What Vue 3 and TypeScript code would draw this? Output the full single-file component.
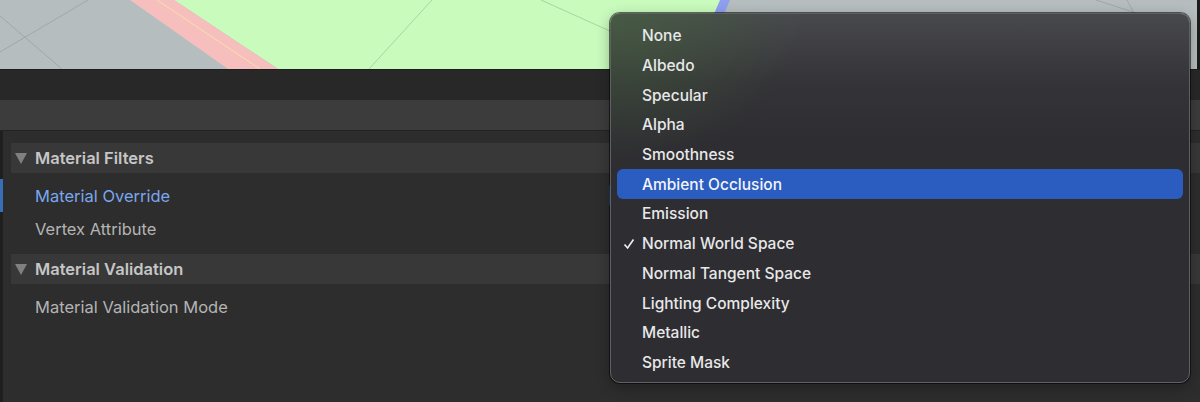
<script setup lang="ts">
interface MenuItem { label: string; active?: boolean; checked?: boolean }
const items: MenuItem[] = [
  { label: 'None' }, { label: 'Albedo' }, { label: 'Specular' }, { label: 'Alpha' },
  { label: 'Smoothness' }, { label: 'Ambient Occlusion', active: true }, { label: 'Emission' },
  { label: 'Normal World Space', checked: true }, { label: 'Normal Tangent Space' },
  { label: 'Lighting Complexity' }, { label: 'Metallic' }, { label: 'Sprite Mask' },
]
</script>

<template>
  <div class="app">
    <div class="scene">
      <svg class="scene-art" width="1197" height="69" viewBox="0 0 1197 69">
        <rect width="1197" height="69" fill="#b5bdbf" />
        <polygon points="174,0 727,0 682,69 278,69" fill="#c9fbbd" />
        <polygon points="130,0 174,0 278,69 228,69" fill="#f6bebc" />
        <polygon points="720,0 730,0 724,14 714,14" fill="#8f9ff0" />
        <line x1="157" y1="0" x2="260" y2="69" stroke="#f0e3a8" stroke-width="1" />
        <g stroke="#9aa2a4" stroke-width="0.8" fill="none">
          <line x1="0" y1="16" x2="62" y2="69" />
          <line x1="0" y1="52" x2="88" y2="0" />
        </g>
        <g stroke="#a3c99b" stroke-width="0.8" fill="none">
          <line x1="369" y1="69" x2="432" y2="0" />
          <line x1="541" y1="0" x2="612" y2="32" />
        </g>
        <g stroke="#9aa2a4" stroke-width="0.8" fill="none">
          <line x1="1096" y1="0" x2="1136" y2="13" />
          <line x1="1127" y1="0" x2="1134" y2="13" />
        </g>
      </svg>
    </div>
    <div class="band"></div>
    <div class="toolbar"></div>
    <div class="panel">
      <section class="group">
        <h3 class="group-head"><span class="tri"></span>Material Filters</h3>
        <div class="row row-focus">
          <span class="row-label">Material Override</span>
          <span class="stub stub-focus"></span>
        </div>
        <div class="row">
          <span class="row-label">Vertex Attribute</span>
          <span class="stub"></span>
        </div>
      </section>
      <section class="group">
        <h3 class="group-head"><span class="tri"></span>Material Validation</h3>
        <div class="row">
          <span class="row-label">Material Validation Mode</span>
          <span class="stub"></span>
        </div>
      </section>
    </div>

    <ul class="menu">
      <li v-for="item in items" :key="item.label" class="item" :class="{ active: item.active }">
        <svg v-if="item.checked" class="check" width="12" height="12" viewBox="0 0 12 12">
          <path d="M1.5 6.5 L4.6 10 L10.5 1.6" fill="none" stroke="#ececec" stroke-width="1.7" />
        </svg>
        <span class="item-label">{{ item.label }}</span>
      </li>
    </ul>
  </div>
</template>

<style>
html, body { margin: 0; background: #2d2d2d; }
</style>

<style scoped>
.app {
  position: relative;
  width: 1200px;
  height: 402px;
  overflow: hidden;
  background: #2d2d2d;
  display: flex;
  flex-direction: column;
  font-family: Inter, "Liberation Sans", sans-serif;
}
.scene {
  height: 69px;
  background: #1c1c1c;
  flex: none;
}
.scene-art { display: block; }
.band {
  height: 31px;
  flex: none;
  background: #282828;
  border-top: 1px solid #1d1d1d;
  box-sizing: border-box;
}
.toolbar {
  height: 30px;
  flex: none;
  background: #3c3c3c;
  border-bottom: 1px solid #232323;
  box-sizing: content-box;
}
.panel {
  flex: 1;
  padding: 12px 0 0 11px;
  border-left: 3px solid #1f1f1f;
  margin-left: 0;
  box-sizing: border-box;
  padding-left: 8px;
  display: flex;
  flex-direction: column;
  gap: 9px;
}
.group { display: flex; flex-direction: column; }
.group-head {
  margin: 0 0 6px;
  height: 30px;
  display: flex;
  align-items: center;
  background: #383838;
  color: #c6c6c6;
  font-size: 16.5px;
  font-weight: 600;
  padding-left: 4px;
  gap: 8px;
}
.tri {
  width: 0;
  height: 0;
  border-left: 6px solid transparent;
  border-right: 6px solid transparent;
  border-top: 11px solid #808080;
}
.row {
  height: 33px;
  display: flex;
  align-items: center;
  justify-content: space-between;
  padding-left: 24px;
  position: relative;
}
.row-label { color: #b4b4b4; font-size: 16.5px; }
.row-focus .row-label { color: #7aa7ee; }
.row-focus::before {
  content: "";
  position: absolute;
  left: -11px;
  top: 0;
  width: 3px;
  height: 100%;
  background: #3a6eb4;
}
.stub {
  width: 100px;
  height: 23px;
  border-radius: 4px;
  background: #515151;
  margin-right: 490px;
}
.stub-focus { outline: 1px solid #3a79c9; height: 25px; background: #444; }
.menu {
  position: absolute;
  left: 610px;
  top: 13px;
  width: 580px;
  height: 370px;
  box-sizing: border-box;
  margin: 0;
  padding: 7px 6px;
  list-style: none;
  border-radius: 10px;
  border: 1px solid #5f6061;
  background:
    radial-gradient(ellipse 190px 150px at 0 0, rgba(70, 105, 60, 0.55), rgba(70, 105, 60, 0) 100%),
    linear-gradient(180deg, #48494d 0, #343337 70px, #2e2d32 130px);
  box-shadow: 0 0 0 1px rgba(0, 0, 0, 0.55), 0 4px 14px rgba(0, 0, 0, 0.3);
  display: flex;
  flex-direction: column;
}
.item {
  position: relative;
  height: 29.7px;
  flex: none;
  display: flex;
  align-items: center;
  padding-left: 25px;
  border-radius: 6px;
  color: #e8e8e8;
  font-size: 15.5px;
  font-weight: 500;
}
.item.active { background: #2b5cbf; color: #f2f4fa; }
.check { position: absolute; left: 6px; top: 9px; }
</style>
